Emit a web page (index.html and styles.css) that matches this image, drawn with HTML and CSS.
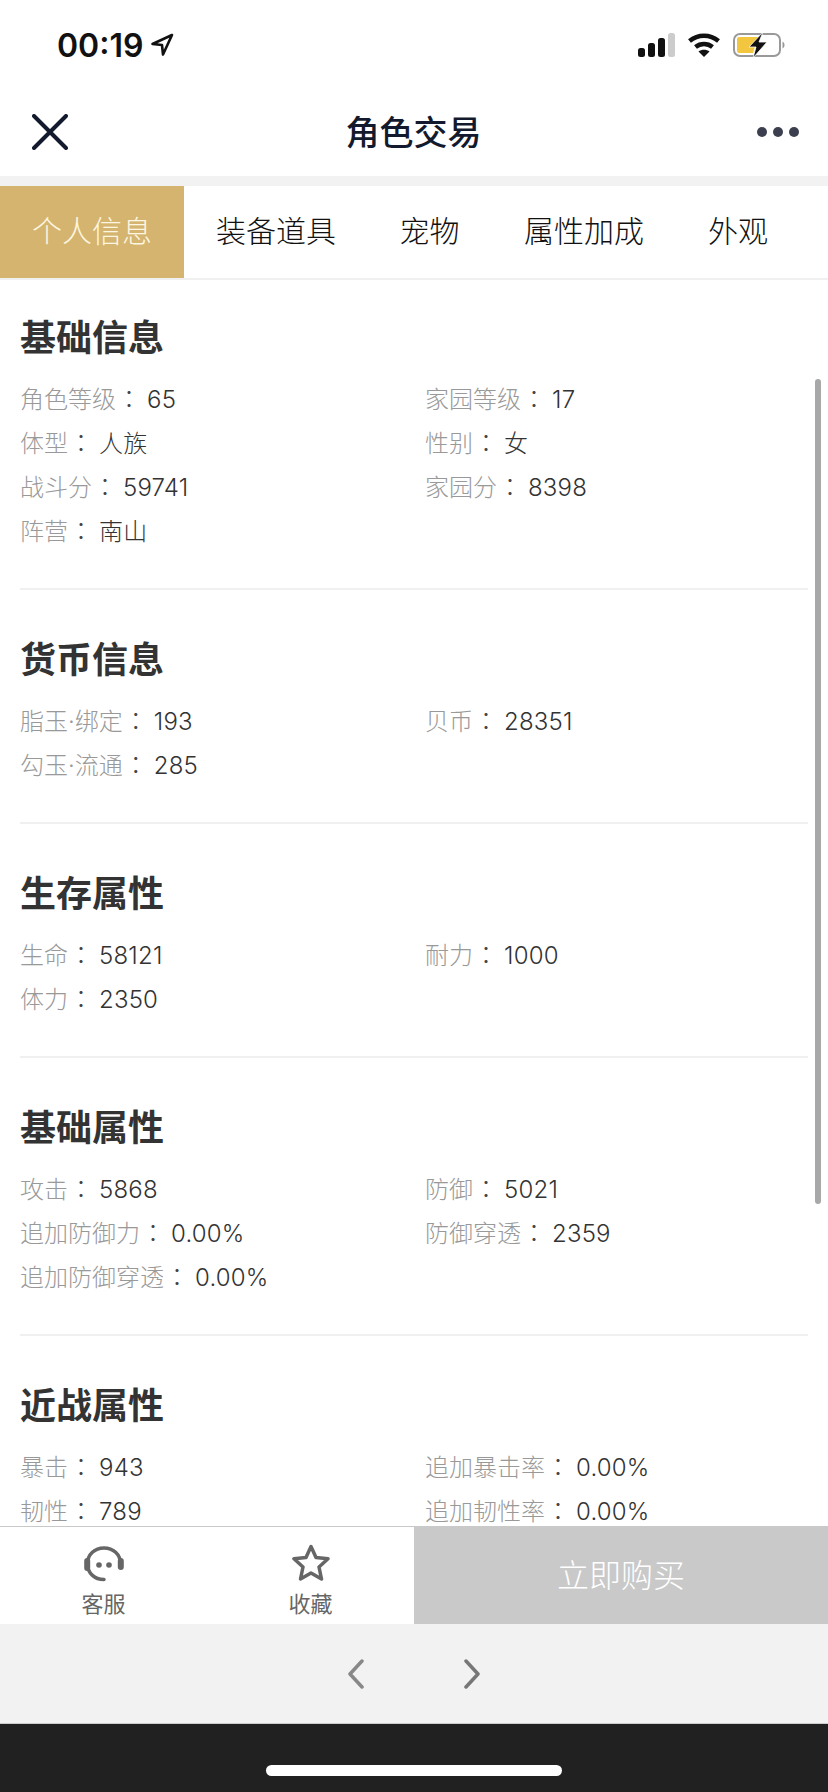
FILE: index.html
```html
<!DOCTYPE html>
<html lang="zh-CN">
<head>
    <meta charset="UTF-8">
    <meta name="viewport" content="width=device-width, initial-scale=1.0">
    <title>角色交易</title>
    <link rel="stylesheet" href="styles.css">
</head>
<body>
    <div class="phone">
        <!-- Status bar -->
        <div class="status-bar">
            <div class="status-time">
                <span>00:19</span>
                <svg width="24" height="24" viewBox="0 0 24 24" fill="none" stroke="#111" stroke-width="2.600" stroke-linejoin="round"><path d="M22 2 2.500 11l9.500 1 1 9.500z"/></svg>
            </div>
            <div class="status-icons">
                <svg width="37" height="24" viewBox="0 0 37 24"><rect x="0" y="15" width="7" height="9" rx="2.500" fill="#111"/><rect x="10" y="10" width="7" height="14" rx="2.500" fill="#111"/><rect x="20" y="5" width="7" height="19" rx="2.500" fill="#111"/><rect x="30" y="0" width="7" height="24" rx="2.500" fill="#ccc"/></svg>
                <svg width="32" height="24" viewBox="0 0 32 24" fill="none" stroke="#111" stroke-width="4.500"><path d="M1.500 8C10 1 22 1 30.500 8"/><path d="M7.500 14c5-4 12-4 17 0"/><path d="M16 24 10.500 18.500c3-2.500 8-2.500 11 0z" fill="#111" stroke="none"/></svg>
                <svg width="52" height="26" viewBox="0 0 52 26"><rect x="1" y="2" width="46" height="22" rx="6" fill="none" stroke="#999" stroke-width="2"/><path d="M4 7a2 2 0 0 1 2-2h19l-5 16H6a2 2 0 0 1-2-2z" fill="#f2c63f"/><path d="M49.500 9.500c1.500.8 2 2 2 3.500s-.5 2.700-2 3.500z" fill="#999"/><path d="M30 0 16 15h7l-3 11 14-16h-8z" fill="#111" stroke="#fff" stroke-width=".8"/></svg>
            </div>
        </div>

        <!-- Nav bar -->
        <div class="nav-bar">
            <svg class="nav-close" width="36" height="36" viewBox="0 0 36 36" stroke="#141a2e" stroke-width="4" stroke-linecap="round"><path d="M2 2l32 32M34 2 2 34"/></svg>
            <div class="nav-title">角色交易</div>
            <div class="nav-more"><i></i><i></i><i></i></div>
        </div>

        <!-- Tabs -->
        <div class="tabs">
            <div class="tab tab-active">个人信息</div>
            <div class="tab">装备道具</div>
            <div class="tab">宠物</div>
            <div class="tab">属性加成</div>
            <div class="tab">外观</div>
        </div>

        <!-- Scrolling content -->
        <div class="content">
            <div class="scroll-thumb"></div>

            <div class="section section-first">
                <h3>基础信息</h3>
                <div class="info-grid">
                    <div class="info"><span class="label">角色等级</span><span class="colon">：</span><span class="value">65</span></div>
                    <div class="info"><span class="label">家园等级</span><span class="colon">：</span><span class="value">17</span></div>
                    <div class="info"><span class="label">体型</span><span class="colon">：</span><span class="value">人族</span></div>
                    <div class="info"><span class="label">性别</span><span class="colon">：</span><span class="value">女</span></div>
                    <div class="info"><span class="label">战斗分</span><span class="colon">：</span><span class="value">59741</span></div>
                    <div class="info"><span class="label">家园分</span><span class="colon">：</span><span class="value">8398</span></div>
                    <div class="info"><span class="label">阵营</span><span class="colon">：</span><span class="value">南山</span></div>
                </div>
            </div>

            <div class="section">
                <h3>货币信息</h3>
                <div class="info-grid">
                    <div class="info"><span class="label">脂玉·绑定</span><span class="colon">：</span><span class="value">193</span></div>
                    <div class="info"><span class="label">贝币</span><span class="colon">：</span><span class="value">28351</span></div>
                    <div class="info"><span class="label">勾玉·流通</span><span class="colon">：</span><span class="value">285</span></div>
                </div>
            </div>

            <div class="section">
                <h3>生存属性</h3>
                <div class="info-grid">
                    <div class="info"><span class="label">生命</span><span class="colon">：</span><span class="value">58121</span></div>
                    <div class="info"><span class="label">耐力</span><span class="colon">：</span><span class="value">1000</span></div>
                    <div class="info"><span class="label">体力</span><span class="colon">：</span><span class="value">2350</span></div>
                </div>
            </div>

            <div class="section">
                <h3>基础属性</h3>
                <div class="info-grid">
                    <div class="info"><span class="label">攻击</span><span class="colon">：</span><span class="value">5868</span></div>
                    <div class="info"><span class="label">防御</span><span class="colon">：</span><span class="value">5021</span></div>
                    <div class="info"><span class="label">追加防御力</span><span class="colon">：</span><span class="value">0.00%</span></div>
                    <div class="info"><span class="label">防御穿透</span><span class="colon">：</span><span class="value">2359</span></div>
                    <div class="info"><span class="label">追加防御穿透</span><span class="colon">：</span><span class="value">0.00%</span></div>
                </div>
            </div>

            <div class="section">
                <h3>近战属性</h3>
                <div class="info-grid">
                    <div class="info"><span class="label">暴击</span><span class="colon">：</span><span class="value">943</span></div>
                    <div class="info"><span class="label">追加暴击率</span><span class="colon">：</span><span class="value">0.00%</span></div>
                    <div class="info"><span class="label">韧性</span><span class="colon">：</span><span class="value">789</span></div>
                    <div class="info"><span class="label">追加韧性率</span><span class="colon">：</span><span class="value">0.00%</span></div>
                </div>
            </div>
        </div>

        <!-- Bottom actions -->
        <div class="action-bar">
            <div class="action-item">
                <svg width="40" height="38" viewBox="0 0 40 38" fill="none" stroke="#666" stroke-width="3.500" stroke-linecap="round"><path d="M3.500 20C3.500 10 11 4 20 4s16.500 6 16.500 16"/><path d="M3.500 20c0 9 7 15.500 16.500 15.500"/><path d="M3.200 17v7" stroke-width="6"/><path d="M36.800 17v6" stroke-width="6"/><circle cx="15" cy="21" r="2.800" fill="#666" stroke="none"/><circle cx="25" cy="21" r="2.800" fill="#666" stroke="none"/></svg>
                <span>客服</span>
            </div>
            <div class="action-item">
                <svg width="38" height="38" viewBox="0 0 38 38" fill="none" stroke="#666" stroke-width="3.500" stroke-linejoin="round"><path d="M19 2.500l5 11 12 1.300-9 8.200 2.500 12L19 29l-10.500 6L11 23l-9-8.200 12-1.300z"/></svg>
                <span>收藏</span>
            </div>
            <div class="buy-btn">立即购买</div>
        </div>

        <!-- Browser toolbar -->
        <div class="toolbar">
            <svg width="16" height="30" viewBox="0 0 16 30" fill="none" stroke="#888" stroke-width="3.500" stroke-linecap="round" stroke-linejoin="round"><path d="M14 2 2 15l12 13"/></svg>
            <svg width="16" height="30" viewBox="0 0 16 30" fill="none" stroke="#777" stroke-width="3.500" stroke-linecap="round" stroke-linejoin="round"><path d="M2 2l12 13L2 28"/></svg>
        </div>

        <!-- Home indicator -->
        <div class="home-bar"><div class="home-pill"></div></div>
    </div>
</body>
</html>
```

FILE: styles.css
```css
* {
    box-sizing: border-box;
}
body {
    margin: 0;
    padding: 0;
    background-color: #fff;
    font-family: "Noto Sans CJK SC", "Noto Sans", sans-serif;
}
.phone {
    width: 828px;
    height: 1792px;
    display: flex;
    flex-direction: column;
    overflow: hidden;
}

/* status bar */
.status-bar {
    height: 88px;
    flex: none;
    display: flex;
    justify-content: space-between;
    align-items: center;
    padding: 2px 43px 0 57px;
}
.status-time {
    display: flex;
    align-items: center;
    gap: 7px;
    font-family: Inter, sans-serif;
    font-size: 32px;
    font-weight: 600;
    color: #111;
}
.status-icons {
    display: flex;
    align-items: center;
    gap: 13px;
}

/* nav bar */
.nav-bar {
    height: 98px;
    flex: none;
    display: flex;
    align-items: center;
    justify-content: space-between;
    padding: 0 29px 0 32px;
    border-bottom: 10px solid #f2f2f2;
}
.nav-title {
    margin-left: 2px;
    padding-bottom: 4px;
    font-size: 34px;
    font-weight: 500;
    color: #141a2e;
}
.nav-more {
    display: flex;
    gap: 6px;
}
.nav-more i {
    width: 10px;
    height: 10px;
    border-radius: 50%;
    background-color: #3c3f50;
}

/* tabs */
.tabs {
    height: 94px;
    flex: none;
    display: flex;
    align-items: stretch;
    border-bottom: 2px solid #f0f0f0;
    font-size: 30px;
    font-weight: 300;
    color: #111;
}
.tab {
    display: flex;
    align-items: center;
    justify-content: center;
    padding-bottom: 6px;
}
.tab:nth-child(1) { width: 184px; }
.tab:nth-child(2) { width: 184px; }
.tab:nth-child(3) { width: 123px; }
.tab:nth-child(4) { width: 186px; }
.tab:nth-child(5) { width: 122px; }
.tab-active {
    background-color: #d4b46f;
    color: #fdf6e0;
}

/* content */
.content {
    position: relative;
    flex: 1;
    min-height: 0;
    overflow: hidden;
    padding: 0 20px;
}
.scroll-thumb {
    position: absolute;
    top: 99px;
    right: 7px;
    width: 6px;
    height: 825px;
    border-radius: 3px;
    background-color: #a8a8a8;
}
.section {
    padding-top: 40px;
    padding-bottom: 36px;
    border-bottom: 2px solid #f0f0f0;
}
.section-first {
    padding-top: 28px;
}
.section h3 {
    margin: 0 0 14px;
    font-size: 36px;
    line-height: 54px;
    font-weight: 700;
    color: #333;
}
.info-grid {
    display: grid;
    grid-template-columns: 405px 1fr;
}
.info {
    display: flex;
    align-items: baseline;
    height: 44px;
    font-size: 24px;
    line-height: 44px;
    font-weight: 300;
}
.label {
    font-family: Inter, "Noto Sans CJK SC", sans-serif;
    color: #999;
}
.colon {
    width: 31px;
    padding-left: 1px;
    font-family: "Noto Sans CJK TC", sans-serif;
    color: #444;
}
.value {
    font-family: Inter, "Noto Sans CJK SC", sans-serif;
    letter-spacing: 0.2px;
    color: #333;
}

/* bottom actions */
.action-bar {
    height: 98px;
    flex: none;
    display: flex;
    border-top: 1px solid #c8c8c8;
    background-color: #fff;
}
.action-item {
    width: 207px;
    display: flex;
    flex-direction: column;
    align-items: center;
    padding-top: 17px;
    gap: 6px;
    font-size: 22px;
    line-height: 28px;
    color: #666;
}
.buy-btn {
    width: 414px;
    display: flex;
    align-items: center;
    justify-content: center;
    margin-top: -1px;
    padding-bottom: 4px;
    background-color: #c9c9c9;
    color: #fff;
    font-size: 32px;
    font-weight: 300;
}

/* browser toolbar */
.toolbar {
    height: 100px;
    flex: none;
    display: flex;
    align-items: center;
    justify-content: center;
    gap: 100px;
    background-color: #f2f2f2;
    border-bottom: 1px solid #ccc;
}

/* home indicator */
.home-bar {
    height: 68px;
    flex: none;
    display: flex;
    justify-content: center;
    padding-top: 41px;
    background-color: #212121;
}
.home-pill {
    width: 296px;
    height: 11px;
    border-radius: 6px;
    background-color: #fff;
}
```
